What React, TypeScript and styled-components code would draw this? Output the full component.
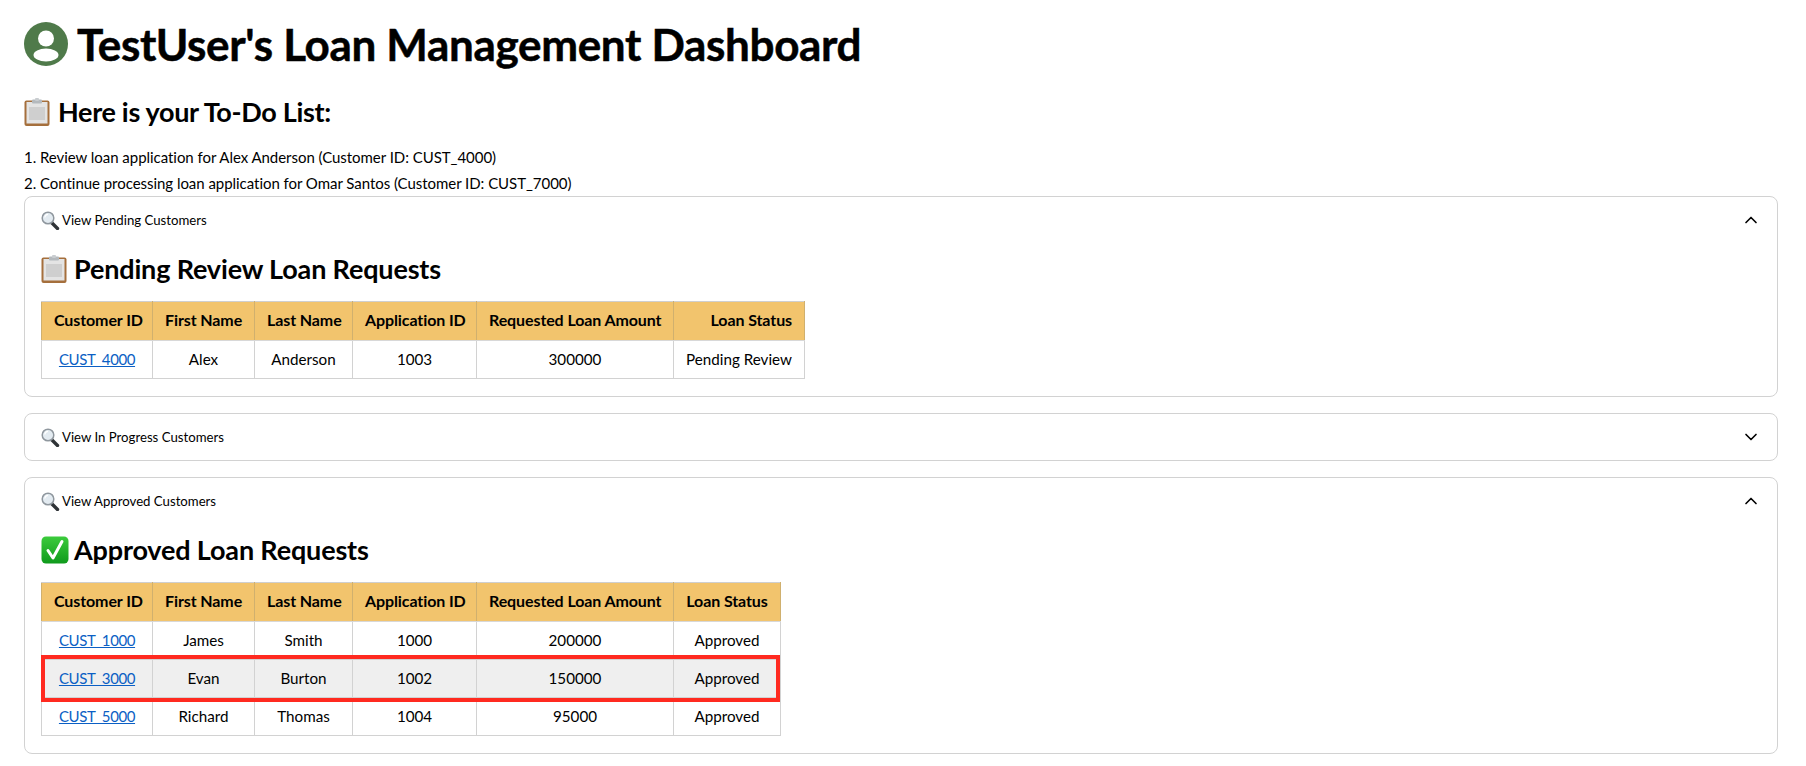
import React from "react";
import styled, { createGlobalStyle } from "styled-components";
import { ChevronDown, ChevronUp } from "lucide-react";

const GlobalStyle = createGlobalStyle`
  html, body {
    margin: 0;
    padding: 0;
    background: #ffffff;
    color: #000000;
    font-family: "Lato", "Noto Sans", sans-serif;
  }
`;

const Page = styled.main`
  padding: 22px 28px 12px 24px;
  display: flex;
  flex-direction: column;
`;

const TitleRow = styled.div`
  display: flex;
  align-items: center;
  gap: 9px;
  height: 44px;
`;

const Title = styled.h1`
  margin: 0;
  font-size: 44px;
  font-weight: 700;
  line-height: 44px;
  letter-spacing: -0.33px;
  -webkit-text-stroke: 0.5px #000000;
`;

const TodoHeading = styled.h2`
  margin: 29px 0 0;
  height: 34px;
  display: flex;
  align-items: center;
  gap: 6px;
  font-size: 27px;
  font-weight: 700;
  line-height: 34px;
  letter-spacing: -0.32px;
`;

const TodoList = styled.div`
  margin-top: 15px;
  display: flex;
  flex-direction: column;
`;

const TodoItem = styled.div`
  height: 26px;
  line-height: 26px;
  font-size: 15px;
  letter-spacing: -0.04px;
`;

const Expander = styled.section`
  border: 1px solid #d2d2d2;
  border-radius: 8px;
  margin-bottom: 16px;
`;

const ExpanderHeader = styled.div`
  height: 46px;
  padding: 0 16px 0 16px;
  display: flex;
  align-items: center;
  justify-content: space-between;
`;

const ExpanderLabel = styled.div`
  display: flex;
  align-items: center;
  gap: 2px;
  font-size: 13.2px;
`;

const ExpanderBody = styled.div`
  padding: 0 16px 17px;
`;

const SectionHeading = styled.h3`
  margin: 5px 0 11px;
  height: 42px;
  display: flex;
  align-items: center;
  gap: 5px;
  font-size: 27px;
  font-weight: 700;
  line-height: 42px;
  letter-spacing: -0.16px;
`;

const TableWrap = styled.div<{ $width: number }>`
  position: relative;
  width: ${({ $width }) => $width}px;
`;

const Table = styled.table`
  width: 100%;
  table-layout: fixed;
  border-collapse: collapse;
  font-size: 15.2px;
`;

const HeadCell = styled.th<{ $align?: string }>`
  height: 39px;
  padding: 0 12px 3px;
  box-sizing: border-box;
  background: #f2c46d;
  border: 1px solid #d0b06e;
  border-top-color: #cfcfcf;
  border-bottom-color: #d8d8d8;
  font-size: 16px;
  letter-spacing: -0.1px;
  font-weight: 700;
  text-align: ${({ $align }) => $align || "center"};
  white-space: nowrap;
`;

const Cell = styled.td<{ $shaded?: boolean }>`
  height: 38px;
  padding: 0 12px 1px;
  box-sizing: border-box;
  border: 1px solid #d2d2d2;
  background: ${({ $shaded }) => ($shaded ? "#efefef" : "#ffffff")};
  text-align: center;
  white-space: nowrap;
`;

const CustomerLink = styled.a`
  color: #0b5fc4;
  text-decoration: underline;
  font-size: 15px;
  letter-spacing: -0.4px;
`;

const HighlightBox = styled.div`
  position: absolute;
  left: 0;
  right: 0;
  top: 73px;
  height: 47px;
  box-sizing: border-box;
  border: 4px solid #ff2a20;
  pointer-events: none;
`;

const AvatarIcon = () => (
  <svg width="44" height="44" viewBox="0 0 44 44">
    <circle cx="22" cy="22" r="22" fill="#4f7a4a" />
    <circle cx="22" cy="16.5" r="8" fill="#ffffff" />
    <ellipse cx="22" cy="33" rx="12.5" ry="6.5" fill="#ffffff" />
  </svg>
);

const ClipboardIcon = () => (
  <svg width="28" height="28" viewBox="0 0 28 28">
    <rect x="0.5" y="2.5" width="25" height="25.5" rx="2" fill="#a56f3c" />
    <rect x="2.5" y="4" width="21" height="21.5" fill="#e4e4e4" />
    <rect x="5" y="9" width="16" height="13" fill="#cfcfcf" />
    <rect x="8" y="1.5" width="10" height="4" rx="1" fill="#b4b9bd" />
    <rect x="11" y="0" width="4" height="3" rx="1" fill="#c9cdd0" />
  </svg>
);

const SearchIcon = () => (
  <svg width="19" height="19" viewBox="0 0 19 19">
    <path d="M10.5 11.5 L16.5 17.5" stroke="#2f3337" strokeWidth="3.4" strokeLinecap="round" />
    <circle cx="7" cy="7" r="5.8" fill="#e3ebf1" stroke="#8f979e" strokeWidth="1.5" />
    <path d="M3.8 6.5 A3.6 3.6 0 0 1 7 3.4" stroke="#ffffff" strokeWidth="1.2" fill="none" />
  </svg>
);

const CheckIcon = () => (
  <svg width="28" height="28" viewBox="0 0 28 28">
    <defs>
      <linearGradient id="checkFill" x1="0" y1="0" x2="0" y2="1">
        <stop offset="0" stopColor="#3ccb3c" />
        <stop offset="1" stopColor="#0f9a1c" />
      </linearGradient>
    </defs>
    <rect x="0.5" y="0.5" width="27" height="27" rx="4.5" fill="url(#checkFill)" />
    <path d="M7 14.5 L12 22 L21 5.5" stroke="#ffffff" strokeWidth="3" fill="none" strokeLinecap="round" strokeLinejoin="round" />
  </svg>
);

const columns = ["Customer ID", "First Name", "Last Name", "Application ID", "Requested Loan Amount", "Loan Status"];

const pendingWidths = [111, 102, 98, 124, 197, 131];
const approvedWidths = [111, 102, 98, 124, 197, 107];

const pendingRows = [["CUST_4000", "Alex", "Anderson", "1003", "300000", "Pending Review"]];
const approvedRows = [
  ["CUST_1000", "James", "Smith", "1000", "200000", "Approved"],
  ["CUST_3000", "Evan", "Burton", "1002", "150000", "Approved"],
  ["CUST_5000", "Richard", "Thomas", "1004", "95000", "Approved"],
];

interface LoanTableProps {
  rows: string[][];
  widths: number[];
  statusAlign?: string;
  highlightRow?: number;
}

const LoanTable: React.FC<LoanTableProps> = ({ rows, widths, statusAlign, highlightRow }) => (
  <TableWrap $width={widths.reduce((a, b) => a + b, 0)}>
    <Table>
      <colgroup>
        {widths.map((w, i) => (
          <col key={i} style={{ width: w }} />
        ))}
      </colgroup>
      <thead>
        <tr>
          {columns.map((c, i) => (
            <HeadCell key={c} $align={i === 5 ? statusAlign : undefined}>
              {c}
            </HeadCell>
          ))}
        </tr>
      </thead>
      <tbody>
        {rows.map((row, r) => (
          <tr key={row[0]}>
            {row.map((value, i) => (
              <Cell key={i} $shaded={r === highlightRow}>
                {i === 0 ? <CustomerLink href="#">{value}</CustomerLink> : value}
              </Cell>
            ))}
          </tr>
        ))}
      </tbody>
    </Table>
    {highlightRow !== undefined && <HighlightBox />}
  </TableWrap>
);

export default function App() {
  return (
    <>
      <GlobalStyle />
      <Page>
        <TitleRow>
          <AvatarIcon />
          <Title>TestUser's Loan Management Dashboard</Title>
        </TitleRow>
        <TodoHeading>
          <ClipboardIcon />
          Here is your To-Do List:
        </TodoHeading>
        <TodoList>
          <TodoItem>1. Review loan application for Alex Anderson (Customer ID: CUST_4000)</TodoItem>
          <TodoItem>2. Continue processing loan application for Omar Santos (Customer ID: CUST_7000)</TodoItem>
        </TodoList>

        <Expander>
          <ExpanderHeader>
            <ExpanderLabel>
              <SearchIcon />
              View Pending Customers
            </ExpanderLabel>
            <ChevronUp size={20} strokeWidth={2} />
          </ExpanderHeader>
          <ExpanderBody>
            <SectionHeading>
              <ClipboardIcon />
              Pending Review Loan Requests
            </SectionHeading>
            <LoanTable rows={pendingRows} widths={pendingWidths} statusAlign="right" />
          </ExpanderBody>
        </Expander>

        <Expander>
          <ExpanderHeader>
            <ExpanderLabel>
              <SearchIcon />
              View In Progress Customers
            </ExpanderLabel>
            <ChevronDown size={20} strokeWidth={2} />
          </ExpanderHeader>
        </Expander>

        <Expander>
          <ExpanderHeader>
            <ExpanderLabel>
              <SearchIcon />
              View Approved Customers
            </ExpanderLabel>
            <ChevronUp size={20} strokeWidth={2} />
          </ExpanderHeader>
          <ExpanderBody>
            <SectionHeading>
              <CheckIcon />
              Approved Loan Requests
            </SectionHeading>
            <LoanTable rows={approvedRows} widths={approvedWidths} highlightRow={1} />
          </ExpanderBody>
        </Expander>
      </Page>
    </>
  );
}
